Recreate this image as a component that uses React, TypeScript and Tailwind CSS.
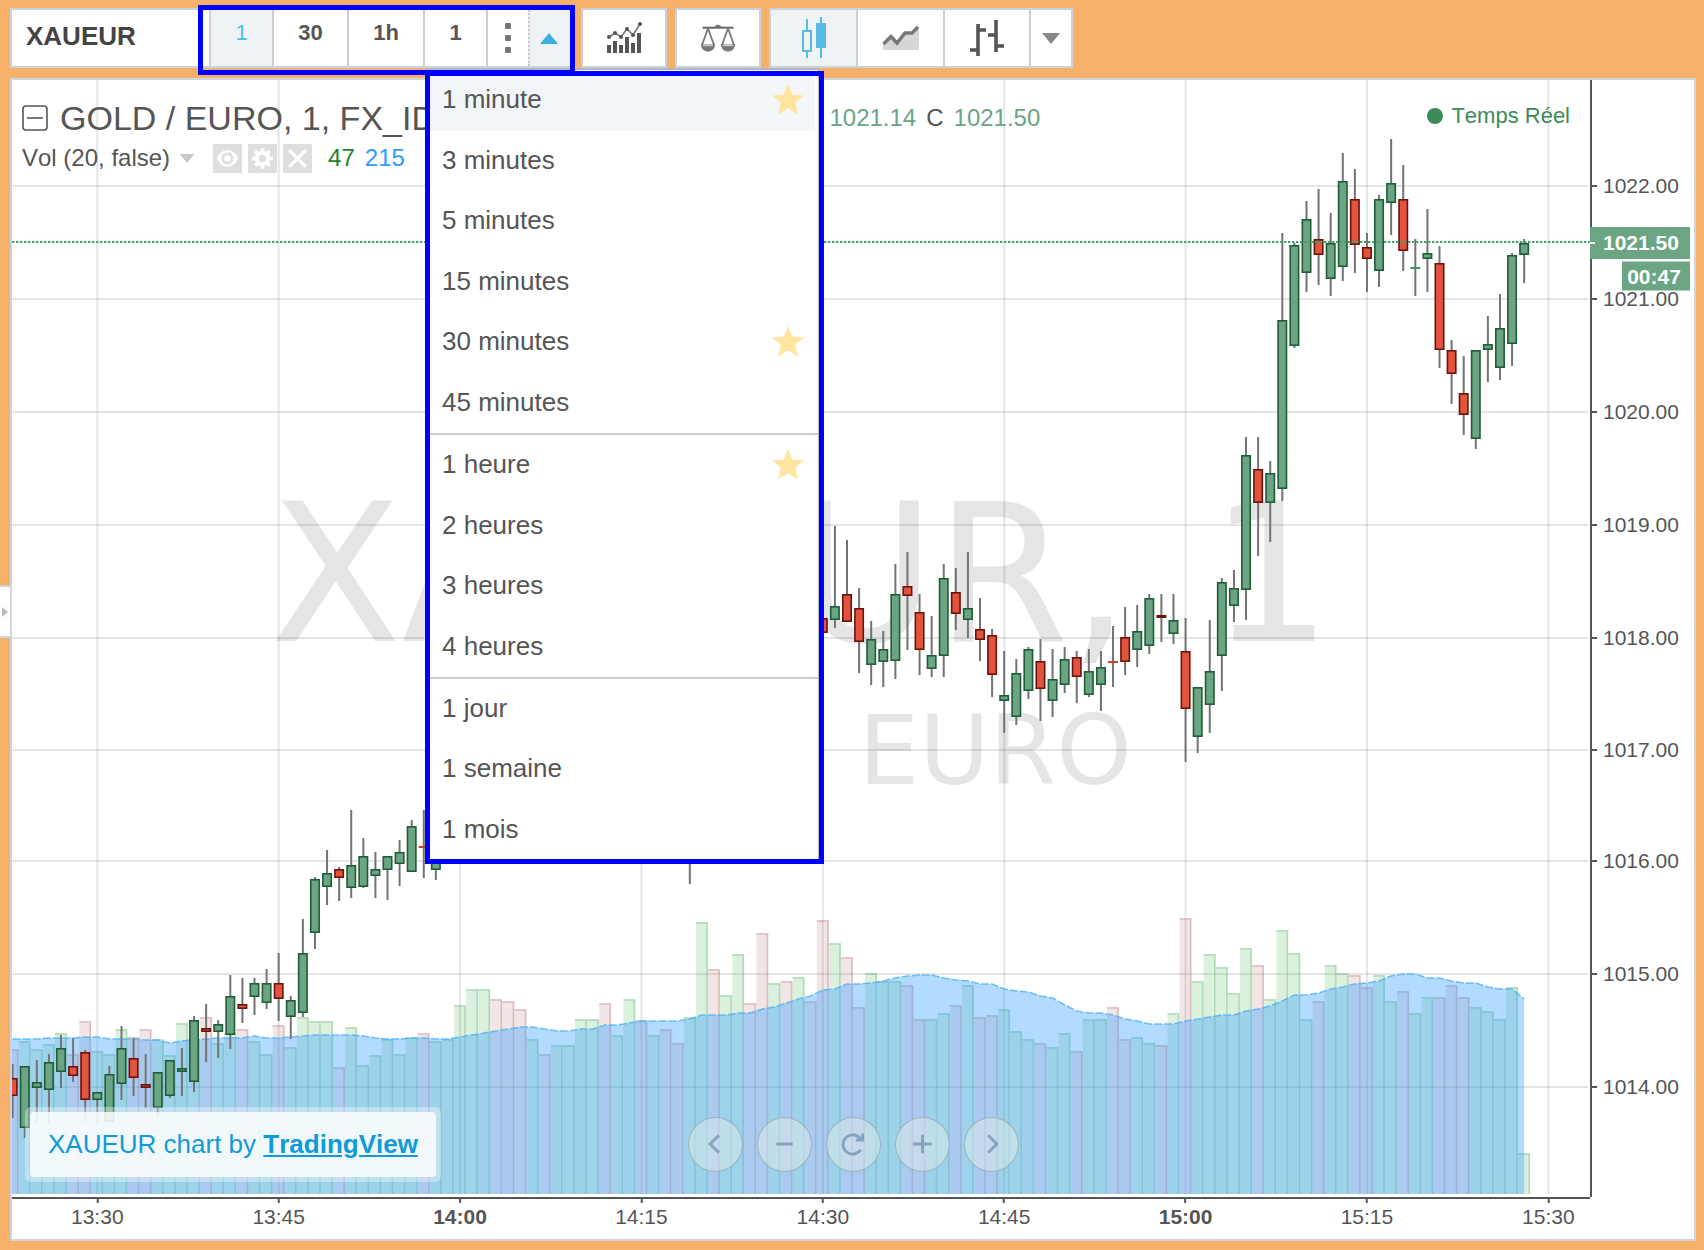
import type { ReactNode } from "react";
import clsx from "clsx";

/* ---------- Data ---------- */

const INTERVAL_GROUPS = [
  {
    height: "h-[363px]",
    items: [
      { label: "1 minute", starred: true, active: true },
      { label: "3 minutes" },
      { label: "5 minutes" },
      { label: "15 minutes" },
      { label: "30 minutes", starred: true },
      { label: "45 minutes" },
    ],
  },
  {
    height: "h-[242px]",
    items: [
      { label: "1 heure", starred: true },
      { label: "2 heures" },
      { label: "3 heures" },
      { label: "4 heures" },
    ],
  },
  {
    height: "h-[181px]",
    items: [{ label: "1 jour" }, { label: "1 semaine" }, { label: "1 mois" }],
  },
] as { height: string; items: { label: string; starred?: boolean; active?: boolean }[] }[];

// Plot area, in chart units
const PLOT = { x: 12, y: 80, width: 1578, height: 1117 };
const VOLUME_BASE = 1194;
const FIRST_BAR = -7;
const LAST_PRICE_Y = 242;

const barX = (i: number) => 97.3 + 12.092 * i;

const PRICE_TICKS = [
  { label: "1022.00", y: 186 },
  { label: "1021.00", y: 299 },
  { label: "1020.00", y: 412 },
  { label: "1019.00", y: 525 },
  { label: "1018.00", y: 638 },
  { label: "1017.00", y: 750 },
  { label: "1016.00", y: 861 },
  { label: "1015.00", y: 974 },
  { label: "1014.00", y: 1087 },
];

const TIME_TICKS = [
  { label: "13:30", bar: 0 },
  { label: "13:45", bar: 15 },
  { label: "14:00", bar: 30, bold: true },
  { label: "14:15", bar: 45 },
  { label: "14:30", bar: 60 },
  { label: "14:45", bar: 75 },
  { label: "15:00", bar: 90, bold: true },
  { label: "15:15", bar: 105 },
  { label: "15:30", bar: 120 },
];

// bar, high, body top, body bottom, low, direction
type Candle = [number, number, number, number, number, "u" | "d"];

const CANDLES: Candle[] = [
  [-7, 1064, 1078, 1096, 1118, "d"],
  [-6, 1066, 1066, 1128, 1138, "u"],
  [-5, 1060, 1082, 1088, 1123, "u"],
  [-4, 1054, 1062, 1090, 1123, "u"],
  [-3, 1035, 1048, 1072, 1088, "u"],
  [-2, 1038, 1066, 1076, 1082, "d"],
  [-1, 1050, 1052, 1100, 1122, "d"],
  [0, 1092, 1092, 1100, 1124, "u"],
  [1, 1066, 1074, 1122, 1122, "u"],
  [2, 1026, 1048, 1084, 1100, "u"],
  [3, 1038, 1058, 1078, 1096, "d"],
  [4, 1054, 1084, 1088, 1108, "d"],
  [5, 1072, 1072, 1108, 1117, "u"],
  [6, 1060, 1060, 1096, 1098, "u"],
  [7, 1048, 1068, 1072, 1096, "u"],
  [8, 1016, 1020, 1082, 1092, "u"],
  [9, 1004, 1028, 1032, 1062, "d"],
  [10, 1020, 1024, 1032, 1058, "u"],
  [11, 975, 996, 1035, 1049, "u"],
  [12, 978, 1004, 1009, 1023, "d"],
  [13, 978, 983, 997, 1015, "u"],
  [14, 969, 983, 1003, 1009, "u"],
  [15, 953, 983, 999, 1021, "d"],
  [16, 996, 1000, 1017, 1039, "u"],
  [17, 919, 953, 1013, 1017, "u"],
  [18, 877, 879, 933, 949, "u"],
  [19, 850, 873, 887, 905, "u"],
  [20, 867, 869, 878, 901, "d"],
  [21, 810, 865, 888, 898, "u"],
  [22, 838, 856, 887, 888, "u"],
  [23, 852, 869, 876, 898, "u"],
  [24, 856, 856, 870, 900, "u"],
  [25, 840, 852, 864, 886, "u"],
  [26, 820, 826, 872, 872, "u"],
  [27, 810, 846, 848, 878, "d"],
  [28, 840, 850, 870, 880, "u"],
  [49, 780, 790, 804, 884, "u"],
  [60, 618, 618, 633, 633, "d"],
  [61, 526, 606, 620, 628, "u"],
  [62, 540, 594, 622, 622, "d"],
  [63, 588, 608, 642, 673, "d"],
  [64, 621, 639, 665, 685, "u"],
  [65, 631, 649, 662, 687, "u"],
  [66, 564, 594, 661, 679, "u"],
  [67, 552, 586, 596, 650, "d"],
  [68, 594, 612, 650, 675, "d"],
  [69, 616, 655, 669, 677, "u"],
  [70, 564, 578, 656, 677, "u"],
  [71, 568, 592, 614, 630, "d"],
  [72, 552, 608, 620, 638, "u"],
  [73, 598, 629, 640, 661, "d"],
  [74, 629, 635, 675, 697, "d"],
  [75, 651, 695, 701, 733, "u"],
  [76, 659, 673, 717, 725, "u"],
  [77, 647, 649, 691, 699, "u"],
  [78, 639, 661, 689, 721, "d"],
  [79, 649, 679, 701, 717, "u"],
  [80, 647, 659, 685, 693, "u"],
  [81, 651, 657, 677, 703, "d"],
  [82, 649, 671, 695, 697, "u"],
  [83, 651, 667, 685, 711, "u"],
  [84, 626, 661, 663, 687, "d"],
  [85, 607, 637, 662, 675, "d"],
  [86, 605, 631, 650, 667, "u"],
  [87, 594, 598, 646, 654, "u"],
  [88, 594, 615, 618, 642, "d"],
  [89, 594, 620, 634, 644, "u"],
  [90, 618, 651, 709, 762, "d"],
  [91, 687, 687, 737, 753, "u"],
  [92, 620, 671, 705, 733, "u"],
  [93, 578, 582, 656, 691, "u"],
  [94, 570, 588, 606, 622, "u"],
  [95, 437, 455, 590, 620, "u"],
  [96, 437, 469, 503, 556, "d"],
  [97, 461, 473, 503, 542, "u"],
  [98, 233, 320, 489, 501, "u"],
  [99, 243, 245, 346, 348, "u"],
  [100, 201, 219, 273, 292, "u"],
  [101, 189, 239, 255, 285, "d"],
  [102, 213, 243, 279, 296, "u"],
  [103, 153, 181, 267, 281, "u"],
  [104, 169, 199, 245, 273, "d"],
  [105, 233, 247, 259, 292, "d"],
  [106, 195, 199, 271, 287, "u"],
  [107, 139, 183, 203, 235, "u"],
  [108, 165, 199, 251, 271, "d"],
  [109, 239, 267, 269, 296, "u"],
  [110, 209, 253, 259, 292, "u"],
  [111, 246, 263, 350, 368, "d"],
  [112, 340, 350, 374, 404, "d"],
  [113, 356, 393, 415, 435, "d"],
  [114, 350, 350, 439, 449, "u"],
  [115, 316, 344, 350, 382, "u"],
  [116, 294, 328, 368, 380, "u"],
  [117, 253, 255, 344, 366, "u"],
  [118, 239, 243, 255, 283, "u"],
];

// Top of each volume bar; negative means a falling bar
const VOLUME = [
  -1050, 1042, 1050, 1045, 1034, -1055, -1022, 1052, 1055, 1030, -1038, -1030, 1040, 1056, 1024,
  1040, -1018, 1044, 1034, -1030, 1042, 1055, -1026, 1048, 1018, 1022, 1022, -1068, 1028, 1066,
  1056, 1040, 1055, 1038, -1034, 1042, 1040, 1006, 990, 990, -1000, -1002, -1010, 1040, -1055,
  1046, 1046, 1020, 1020, -1004, 1036, 1000, -1021, 1036, -1030, -1044, 1018, 923, -970, 996,
  955, -1004, -934, 984, -982, 978, -1002, -921, 944, -958, -1008, 974, 982, 982, -986,
  -1020, 1020, 1014, -1006, 986, -1018, -1016, 1010, 1032, 1040, -1044, 1048, 1034, -1052, 1020,
  1020, -1008, -1040, 1038, 1044, -1046, 1014, -919, 982, 955, 968, 994, 949, -966, 1000,
  931, 954, 1020, -1002, 966, 974, -976, -988, 976, 1002, -992, 1014, 998, -998, -986,
  -998, 1008, 1012, 1020, 988, 1154,
];

const VOLUME_MA = [
  1039, 1039, 1039, 1038, 1038, 1038, 1037, 1037, 1039, 1039, 1039, 1040, 1040, 1043, 1041,
  1040, 1039, 1038, 1038, 1038, 1036, 1038, 1038, 1037, 1036, 1035, 1035, 1035, 1035, 1036,
  1038, 1039, 1039, 1038, 1038, 1039, 1039, 1037, 1035, 1033, 1031, 1029, 1027, 1027, 1029,
  1031, 1031, 1029, 1029, 1025, 1025, 1023, 1021, 1021, 1021, 1021, 1019, 1015, 1015, 1015,
  1013, 1013, 1009, 1007, 1003, 999, 996, 990, 989, 984, 984, 983, 981, 978, 976,
  975, 975, 978, 980, 981, 984, 984, 989, 991, 992, 996, 998, 1005, 1011, 1013,
  1013, 1015, 1019, 1021, 1024, 1024, 1024, 1021, 1019, 1017, 1015, 1015, 1011, 1009, 1006,
  1001, 995, 995, 993, 989, 987, 984, 983, 981, 976, 974, 974, 978, 978, 981,
  983, 983, 987, 989, 989, 999,
];

/* ---------- Icons ---------- */

function IndicatorsIcon() {
  const line = [
    [3, 15],
    [9, 11],
    [15, 15],
    [21, 7],
    [27, 13],
    [34, 2],
  ];
  const bars = [23, 19, 23, 15, 21, 11];
  return (
    <svg width="36" height="32" viewBox="0 0 36 32" fill="#555" aria-hidden="true">
      {bars.map((top, i) => (
        <rect key={i} x={1 + i * 6} y={top} width="4" height={31 - top} />
      ))}
      <polyline points={line.join(" ")} fill="none" stroke="#777" strokeWidth="1.6" />
      {line.map(([x, y]) => (
        <circle key={x} cx={x} cy={y} r="2" />
      ))}
    </svg>
  );
}

function ScalesIcon() {
  return (
    <svg width="36" height="30" viewBox="0 0 36 30" fill="none" stroke="#777" aria-hidden="true">
      <path d="M2.5 4.7H33.5" stroke="#666" strokeWidth="2" />
      <path d="M14.5 4.5a3.6 3.6 0 0 1 7 0z" fill="#777" stroke="none" />
      <path d="M8 5.5L2 22M8 5.5L14 22M28 5.5L22 22M28 5.5L34 22" strokeWidth="1.8" />
      <path d="M1 21.500H15C15 26 11.500 28.500 8 28.500S1 26 1 21.500z" fill="#777" stroke="none" />
      <path d="M21 21.500H35C35 26 31.500 28.500 28 28.500S21 26 21 21.500z" fill="#777" stroke="none" />
      <path d="M3 22.700H13M23 22.700H33" stroke="#ddd" strokeWidth="1" />
    </svg>
  );
}

function CandlesIcon() {
  return (
    <svg width="26" height="42" viewBox="0 0 26 42" fill="none" stroke="#56bce6" strokeWidth="2" aria-hidden="true">
      <path d="M6 2V13M6 35V41M20 0V41" />
      <rect x="2" y="14" width="8" height="20" />
      <rect x="15" y="6" width="10" height="25" fill="#56bce6" stroke="none" />
    </svg>
  );
}

function AreaIcon() {
  return (
    <svg width="38" height="26" viewBox="0 0 38 26" fill="none" aria-hidden="true">
      <path d="M1 19L9 11L15 18L23 8H30L37 1V25H1z" fill="#d6d6d6" />
      <path d="M1.500 19L9 11.500L15 18L23 8H30L36 2" stroke="#777" strokeWidth="3.500" />
    </svg>
  );
}

function BarsIcon() {
  return (
    <svg width="36" height="38" viewBox="0 0 36 38" fill="none" stroke="#555" strokeWidth="3.600" aria-hidden="true">
      <path d="M9 5V37M9 11H17M1 31H9M27 1V33M19 16H27M27 27H35" />
    </svg>
  );
}

function Triangle({ className, up }: { className: string; up?: boolean }) {
  return (
    <svg viewBox="0 0 18 11" className={className} fill="currentColor" aria-hidden="true">
      <path d={up ? "M0 11L9 0L18 11z" : "M0 0H18L9 11z"} />
    </svg>
  );
}

function StarIcon() {
  return (
    <svg width="32" height="31" viewBox="0 0 32 31" fill="#ffe5a0" aria-hidden="true">
      <path d="M16 0L20.300 10.500L32 11.500L23.200 18.800L26 30.500L16 24.300L6 30.500L8.800 18.800L0 11.500L11.700 10.500z" />
    </svg>
  );
}

/* ---------- Toolbar ---------- */

function ToolButton({
  label,
  width,
  active,
  divided,
  children,
}: {
  label: string;
  width: string;
  active?: boolean;
  divided?: boolean;
  children: ReactNode;
}) {
  return (
    <button
      type="button"
      aria-label={label}
      className={clsx(
        "flex items-center justify-center",
        width,
        divided && "border-l-2 border-[#cdcfd1]",
        active && "bg-[#eff3f6]",
      )}
    >
      {children}
    </button>
  );
}

function IntervalButton({ label, width, active }: { label: string; width: string; active?: boolean }) {
  return (
    <button
      type="button"
      className={clsx(
        "border-l-2 border-[#cdcfd1] pb-3 text-[22px]",
        width,
        active ? "bg-[#eff3f6] text-[#4fbde8]" : "font-bold text-[#555]",
      )}
    >
      {label}
    </button>
  );
}

function IntervalMenu() {
  return (
    <div
      role="menu"
      className="absolute top-[60px] left-[415px] z-20 w-[395px] border-2 border-[#b4b6b8] bg-white"
    >
      {INTERVAL_GROUPS.map((group, i) => (
        <div
          key={group.items[0].label}
          className={clsx("box-content flex flex-col", group.height, i > 0 && "border-t-2 border-[#c9cccc]")}
        >
          {group.items.map((item) => (
            <button
              key={item.label}
              type="button"
              role="menuitem"
              className={clsx(
                "mr-[3px] flex flex-1 items-center justify-between pr-[11px] pb-[2px] pl-[15px] text-[26px] leading-8 text-[#555]",
                item.active && "bg-[#f2f6f9]",
              )}
            >
              {item.label}
              {item.starred && <StarIcon />}
            </button>
          ))}
        </div>
      ))}
    </div>
  );
}

function Toolbar() {
  return (
    <header className="flex h-[60px] gap-2">
      <div className="relative flex">
        <div className="flex border-2 border-[#c8d3dc] bg-white">
          <input
            aria-label="Symbole"
            defaultValue="XAUEUR"
            className="w-[197px] bg-transparent pb-1 pl-[14px] text-[26px] font-bold text-[#444] outline-none"
          />
          <IntervalButton label="1" width="w-[63px]" active />
          <IntervalButton label="30" width="w-[75px]" />
          <IntervalButton label="1h" width="w-[76px]" />
          <IntervalButton label="1" width="w-[63px]" />
          <ToolButton label="Plus" width="w-[42px]" divided>
            <svg width="6" height="30" viewBox="0 0 6 30" fill="#777" aria-hidden="true">
              <rect width="6" height="6" rx="1" />
              <rect y="12" width="6" height="6" rx="1" />
              <rect y="24" width="6" height="6" rx="1" />
            </svg>
          </ToolButton>
          <button
            type="button"
            aria-label="Intervalles"
            aria-expanded="true"
            className="flex w-[43px] items-center justify-center border-l-2 border-dotted border-[#c4c8cb] bg-[#eff3f6] pr-1 text-[#3bafdb]"
          >
            <Triangle up className="h-[11px] w-[18px]" />
          </button>
        </div>
        <IntervalMenu />
        {/* Highlight frames */}
        <div className="pointer-events-none absolute -top-[3px] left-[188px] z-30 h-[70px] w-[377px] border-[5px] border-[#0000ff]" />
        <div className="pointer-events-none absolute top-[63px] left-[415px] z-30 h-[793px] w-[399px] border-[5px] border-[#0000ff]" />
      </div>

      <div className="flex border-2 border-[#c8d3dc] bg-white">
        <ToolButton label="Indicateurs" width="w-[82px]">
          <IndicatorsIcon />
        </ToolButton>
      </div>
      <div className="flex border-2 border-[#c8d3dc] bg-white">
        <ToolButton label="Comparer" width="w-[82px]">
          <ScalesIcon />
        </ToolButton>
      </div>
      <div className="flex border-2 border-[#c8d3dc] bg-white">
        <ToolButton label="Chandeliers" width="w-[85px]" active>
          <CandlesIcon />
        </ToolButton>
        <ToolButton label="Aire" width="w-[87px]" divided>
          <AreaIcon />
        </ToolButton>
        <ToolButton label="Barres" width="w-[86px]" divided>
          <BarsIcon />
        </ToolButton>
        <ToolButton label="Autres styles" width="w-[42px]" divided>
          <Triangle className="h-[11px] w-[18px] text-[#888]" />
        </ToolButton>
      </div>
    </header>
  );
}

/* ---------- Chart ---------- */

function PlotSvg() {
  const maLine = VOLUME_MA.map((y, i) => `${barX(i + FIRST_BAR)},${y}`).join(" ");
  return (
    <svg
      className="absolute inset-0 h-full w-full"
      viewBox={`${PLOT.x} ${PLOT.y} ${PLOT.width} ${PLOT.height}`}
      preserveAspectRatio="none"
      aria-hidden="true"
    >
      <g stroke="#000" strokeOpacity="0.1" strokeWidth="2">
        {PRICE_TICKS.map((t) => (
          <line key={t.label} x1={PLOT.x} x2={1588} y1={t.y} y2={t.y} />
        ))}
        {TIME_TICKS.map((t) => (
          <line key={t.label} x1={barX(t.bar)} x2={barX(t.bar)} y1={PLOT.y} y2={1194} />
        ))}
      </g>

      {/* Volume */}
      {VOLUME.map((v, i) => {
        const top = Math.abs(v);
        const x = barX(i + FIRST_BAR) - 6;
        const up = v > 0;
        return (
          <g key={i}>
            <rect
              x={x}
              y={top - 1}
              width="12"
              height={VOLUME_BASE - top + 1}
              fill={up ? "#3cae4a" : "#9a4444"}
              fillOpacity={up ? 0.18 : 0.14}
            />
            <path
              d={`M${x} ${top}H${x + 11}V${VOLUME_BASE}`}
              fill="none"
              stroke={up ? "#2a9650" : "#a04848"}
              strokeOpacity="0.25"
              strokeWidth="1.600"
            />
          </g>
        );
      })}
      <polygon
        points={`${PLOT.x},1039 ${maLine} ${barX(118)},${VOLUME_BASE} ${PLOT.x},${VOLUME_BASE}`}
        fill="#38a0ff"
        fillOpacity="0.38"
      />
      <polyline points={maLine} fill="none" stroke="#4bb0f8" strokeOpacity="0.8" strokeWidth="1.500" strokeDasharray="8 2" />

      {/* Candles */}
      {CANDLES.map(([i, high, top, bottom, low, dir]) => {
        const x = barX(i);
        const thin = bottom - top < 3;
        const edge = dir === "u" ? "#1f5c38" : "#6b140c";
        const fill = dir === "u" ? "#6ba583" : "#e2543e";
        return (
          <g key={i}>
            <line x1={x} x2={x} y1={high} y2={low} stroke="#737375" strokeWidth="2" />
            {thin ? (
              <rect x={x - 5} y={top} width="10" height="2" fill={dir === "u" ? "#3f8f60" : "#c9422d"} />
            ) : (
              <rect
                x={x - 4.2}
                y={top + 0.8}
                width="8.4"
                height={bottom - top - 1.6}
                fill={fill}
                stroke={edge}
                strokeWidth="1.600"
              />
            )}
          </g>
        );
      })}

      <line
        x1={PLOT.x}
        x2={1590}
        y1={LAST_PRICE_Y}
        y2={LAST_PRICE_Y}
        stroke="#4c9d6c"
        strokeWidth="2"
        strokeDasharray="2.400 1.600"
      />
    </svg>
  );
}

function Watermark() {
  return (
    <div
      aria-hidden="true"
      className="absolute inset-0 flex flex-col items-center justify-center font-['DejaVu_Sans',sans-serif] whitespace-nowrap text-[#e5e5e5]"
    >
      <div className="flex gap-20 text-[192px] leading-[224px]">
        <span>XAUEUR,</span>
        <span>1</span>
      </div>
      <div className="flex gap-12 text-[96px] leading-[128px]">
        <span>GOLD /</span>
        <span>EURO</span>
      </div>
    </div>
  );
}

function StudyButton({ label, children }: { label: string; children: ReactNode }) {
  return (
    <button type="button" aria-label={label} className="size-[29px] bg-[#dedede]">
      <svg viewBox="0 0 28 28" fill="none" stroke="#fff" strokeWidth="3" aria-hidden="true">
        {children}
      </svg>
    </button>
  );
}

function Legend() {
  return (
    <div className="absolute top-5 left-[10px] text-[24px] leading-8 whitespace-nowrap text-[#555]">
      <div className="flex h-9 items-center">
        <button type="button" aria-label="Réduire la légende" className="mr-3">
          <svg width="26" height="26" viewBox="0 0 26 26" fill="none" stroke="#555" strokeWidth="1.600" aria-hidden="true">
            <rect x="1" y="1" width="24" height="24" rx="3" />
            <path d="M5 13H21" />
          </svg>
        </button>
        <h1 className="text-[34px] leading-9">GOLD / EURO, 1, FX_IDC</h1>
        <dl className="ml-24 flex gap-[10px]">
          <dt>O</dt>
          <dd className="text-[#6ba583]">1021.14</dd>
          <dt>H</dt>
          <dd className="text-[#6ba583]">1021.50</dd>
          <dt>L</dt>
          <dd className="text-[#6ba583]">1021.14</dd>
          <dt>C</dt>
          <dd className="text-[#6ba583]">1021.50</dd>
        </dl>
      </div>
      <div className="mt-[6px] flex items-center">
        <span>Vol (20, false)</span>
        <Triangle className="ml-[9px] h-[9px] w-4 text-[#c8c8c8]" />
        <div className="ml-[18px] flex gap-[6px]">
          <StudyButton label="Masquer">
            <path d="M4 14C7 3.500 21 3.500 24 14C21 24.500 7 24.500 4 14z" fill="#fff" stroke="none" />
            <circle cx="14" cy="14" r="4.500" stroke="#dedede" strokeWidth="2.500" />
          </StudyButton>
          <StudyButton label="Paramètres">
            <circle cx="14" cy="14" r="5.500" strokeWidth="4" />
            <path
              d="M14 4V8M14 20V24M4 14H8M20 14H24M7 7L10 10M18 18L21 21M7 21L10 18M18 10L21 7"
              strokeWidth="3.500"
            />
          </StudyButton>
          <StudyButton label="Supprimer">
            <path d="M6 6L22 22M22 6L6 22" />
          </StudyButton>
        </div>
        <span className="ml-4 text-[#1c8528]">47</span>
        <span className="ml-[10px] text-[#2f9bff]">215</span>
      </div>
    </div>
  );
}

function PriceAxis() {
  const pct = (y: number) => `${((y - PLOT.y) / PLOT.height) * 100}%`;
  return (
    <div className="relative border-l-2 border-[#555] text-[21px] leading-7 text-[#555]">
      {PRICE_TICKS.map((t) => (
        <div
          key={t.label}
          className="absolute left-0 flex -translate-y-1/2 items-center gap-[6px]"
          style={{ top: pct(t.y) }}
        >
          <span className="h-[2px] w-[5px] bg-[#555]" />
          {t.label}
        </div>
      ))}
      <div
        className="absolute right-1 -left-[2px] flex h-8 -translate-y-1/2 items-center gap-2 bg-[#6ba583] font-bold text-white"
        style={{ top: pct(243) }}
      >
        <span className="h-[2px] w-[5px] bg-white" />
        1021.50
      </div>
      <div
        className="absolute right-1 flex h-[29px] w-[68px] -translate-y-1/2 items-center justify-center bg-[#6ba583] pr-2 pl-1 font-bold text-white"
        style={{ top: pct(276) }}
      >
        00:47
      </div>
    </div>
  );
}

function TimeAxis() {
  return (
    <div className="relative border-t-2 border-[#555] text-[21px] leading-6 text-[#555]">
      {TIME_TICKS.map((t) => (
        <div
          key={t.label}
          className={clsx("absolute top-0 flex -translate-x-1/2 flex-col items-center", t.bold && "font-bold")}
          style={{ left: `${((barX(t.bar) - PLOT.x) / PLOT.width) * 100}%` }}
        >
          <span className="h-1 w-[2px] bg-[#555]" />
          <span className="mt-[2px]">{t.label}</span>
        </div>
      ))}
    </div>
  );
}

const NAV_BUTTONS = [
  { label: "Défiler à gauche", path: "M31 18L22 27L31 36" },
  { label: "Zoom arrière", path: "M19 27H36" },
  { label: "Réinitialiser", path: "M35 22A10 10 0 1 0 35 33M37 16V23H30" },
  { label: "Zoom avant", path: "M18 27H37M27.500 17.500V36.500" },
  { label: "Défiler à droite", path: "M24 18L33 27L24 36" },
];

function NavButtons() {
  return (
    <div className="absolute inset-x-0 bottom-[67px] flex justify-center gap-[14px]">
      {NAV_BUTTONS.map((b) => (
        <button
          key={b.label}
          type="button"
          aria-label={b.label}
          className="size-[55px] rounded-full border border-[#7f97a8]/60 bg-[#dfeaea]/50"
        >
          <svg viewBox="0 0 55 55" fill="none" stroke="#84a3be" strokeWidth="3" aria-hidden="true">
            <path d={b.path} />
          </svg>
        </button>
      ))}
    </div>
  );
}

function Chart() {
  return (
    <section className="relative mt-[10px] grid flex-1 grid-cols-[minmax(0,1fr)_104px] grid-rows-[minmax(0,1fr)_42px] border-2 border-[#cbd6df] bg-white">
      <div className="relative overflow-hidden">
        <Watermark />
        <PlotSvg />
        <Legend />
        <div className="absolute top-5 right-5 flex items-center gap-2 text-[22px] leading-8 text-[#3a8b57]">
          <span className="size-4 rounded-full bg-[#3a8b57]" />
          Temps Réel
        </div>
        <div className="absolute bottom-[15px] left-[13px] rounded-md bg-white/35 p-[5px]">
          <p className="rounded-sm bg-white/80 px-[18px] py-4 text-[26px] leading-[33px] whitespace-nowrap text-[#109bd8]">
            XAUEUR chart by{" "}
            <a href="#tradingview" className="font-bold underline">
              TradingView
            </a>
          </p>
        </div>
      </div>
      <PriceAxis />
      <TimeAxis />
      <NavButtons />
    </section>
  );
}

export default function App() {
  return (
    <main className="relative flex min-h-screen flex-col bg-[#f7b069] pt-2 pr-2 pb-[9px] pl-[10px] font-['Liberation_Sans',Arial,sans-serif] [font-kerning:none]">
      <Toolbar />
      <Chart />
      <button
        type="button"
        aria-label="Afficher les outils de dessin"
        className="absolute top-[585px] left-0 flex h-[53px] w-3 items-center border-2 border-l-0 border-[#cbd6df] bg-white"
      >
        <svg width="10" height="10" viewBox="0 0 10 10" fill="#bbb" aria-hidden="true">
          <path d="M2 0L8 5L2 10z" />
        </svg>
      </button>
    </main>
  );
}
